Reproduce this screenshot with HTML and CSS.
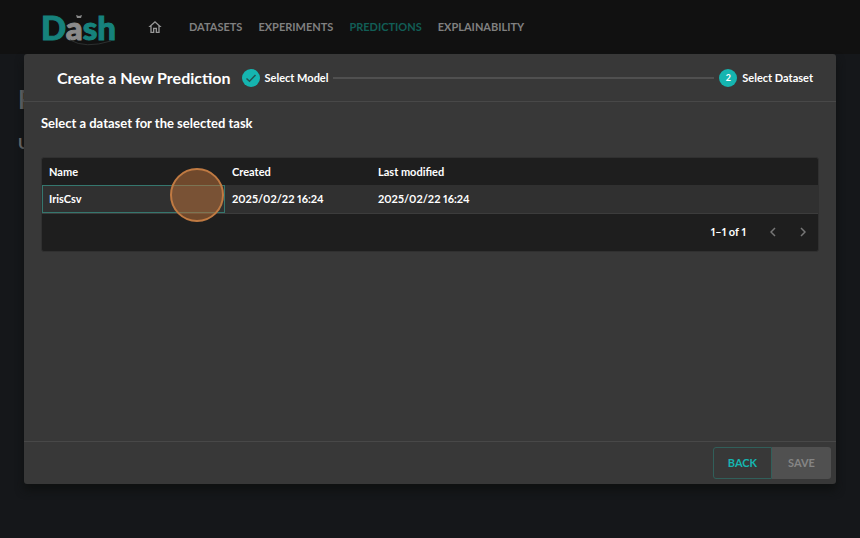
FILE: index.html
```
<!DOCTYPE html>
<html lang="en">
<head>
<meta charset="utf-8">
<title>Dash</title>
<link rel="stylesheet" href="styles.css">
</head>
<body>
<header class="navbar">
  <a class="logo" href="#"><span>D</span><span class="logo-light">a</span><span>sh</span>
    <svg class="logo-swoosh" viewBox="0 0 44 8" aria-hidden="true"><path d="M1 1 Q16 10 42 2" fill="none" stroke="#2c2f2f" stroke-width="1"/></svg>
    <svg class="logo-spark" viewBox="0 0 6 4" aria-hidden="true"><path d="M0 0L3 1L6 0L5 3H1Z" fill="#8a8a8a"/></svg>
  </a>
  <nav class="nav">
    <a class="home" href="#" aria-label="Home"><svg viewBox="0 0 24 24" width="16" height="16" aria-hidden="true"><path d="M12 3L2 12h3v9h6v-6h2v6h6v-9h3L12 3zm5 16h-2v-6H9v6H7v-8.800l5-4.500 5 4.500V19z" fill="#979797"/></svg></a>
    <a href="#">DATASETS</a>
    <a href="#">EXPERIMENTS</a>
    <a class="active" href="#">PREDICTIONS</a>
    <a href="#">EXPLAINABILITY</a>
  </nav>
</header>
<main class="page">
  <h1>P</h1>
  <p>U</p>
</main>
<div class="overlay">
  <section class="dialog" role="dialog" aria-labelledby="dialog-title">
    <header class="dialog-header">
      <h2 id="dialog-title">Create a New Prediction</h2>
      <ol class="stepper">
        <li><span class="badge"><svg viewBox="0 0 18 18" width="18" height="18" aria-hidden="true"><path d="M4.500 9.500L7.500 12.200L13.500 6" fill="none" stroke="#235351" stroke-width="1.500"/></svg></span>Select Model</li>
        <li class="connector" aria-hidden="true"></li>
        <li><span class="badge">2</span>Select Dataset</li>
      </ol>
    </header>
    <div class="dialog-body">
      <h3>Select a dataset for the selected task</h3>
      <div class="grid">
        <table>
          <colgroup><col class="col-name"><col class="col-date"><col></colgroup>
          <thead><tr><th>Name</th><th>Created</th><th>Last modified</th></tr></thead>
          <tbody><tr><td class="focused">IrisCsv<span class="pointer"></span></td><td>2025/02/22 16:24</td><td>2025/02/22 16:24</td></tr></tbody>
        </table>
        <div class="pager">
          <span>1–1 of 1</span>
          <button type="button" aria-label="Previous page"><svg viewBox="0 0 6 10" width="6" height="10"><path d="M5 1L1 5L5 9"/></svg></button>
          <button type="button" aria-label="Next page"><svg viewBox="0 0 6 10" width="6" height="10"><path d="M1 1L5 5L1 9"/></svg></button>
        </div>
      </div>
    </div>
    <footer class="dialog-footer">
      <button class="back" type="button">BACK</button>
      <button class="save" type="button" disabled>SAVE</button>
    </footer>
  </section>
</div>
</body>
</html>
```
FILE: styles.css
```
* { box-sizing: border-box; }
body {
  margin: 0;
  min-height: 100vh;
  background: #15171a;
  color: #fff;
  font: 700 11px/16px Lato, "Open Sans", sans-serif;
  font-variant-numeric: proportional-nums;
}
h1, h2, h3, p, ol { margin: 0; padding: 0; }
a { color: inherit; text-decoration: none; }
button { font: inherit; }
.navbar {
  display: flex;
  align-items: center;
  height: 54px;
  padding: 0 41px;
  background: #111;
  color: #808080;
}
.logo {
  position: relative;
  color: #16827c;
  font: 900 33px/40px Lato, sans-serif;
  -webkit-text-stroke: 1px currentColor;
}
.logo-light { color: #8a8a8a; }
.logo-swoosh { position: absolute; left: 28px; bottom: 0; width: 44px; height: 8px; }
.logo-spark { position: absolute; left: 35px; top: 8px; width: 6px; height: 4px; }
.nav { display: flex; align-items: center; gap: 16px; margin-left: 31px; }
.home { display: flex; margin-right: 10px; }
.active { color: #115e56; }
.page { padding: 31px 18px; color: #777; }
.page h1 { font-size: 26px; line-height: 28px; }
.page p { margin-top: 22px; font-size: 16px; }
.overlay {
  position: absolute;
  inset: 0;
  display: flex;
  padding: 54px 24px;
}
.dialog {
  display: flex;
  flex: 1;
  flex-direction: column;
  border-radius: 3px;
  background: #383838;
  box-shadow: 0 6px 8px #0f1111;
}
.dialog-header {
  display: flex;
  align-items: center;
  gap: 11px;
  height: 48px;
  padding: 0 23px 0 33px;
  border-bottom: 1px solid #484848;
}
.dialog-header h2 { font-size: 16px; line-height: 20px; }
.stepper { display: flex; flex: 1; align-items: center; gap: 5px; list-style: none; }
.stepper li { display: flex; align-items: center; gap: 5px; }
.stepper .connector { flex: 1; height: 2px; background: #505050; }
.badge {
  display: grid;
  place-items: center;
  width: 18px;
  height: 18px;
  border-radius: 50%;
  background: #15b5b0;
  font-size: 9px;
}
.dialog-body { flex: 1; padding: 13px 17px; }
.dialog-body h3 { font-size: 13px; line-height: 16px; }
.grid { margin-top: 26px; border: 1px solid #303030; border-radius: 3px; background: #1e1e1e; }
table { width: 100%; border-collapse: collapse; table-layout: fixed; }
.col-name { width: 183px; }
.col-date { width: 146px; }
th, td { padding: 0 7px; text-align: left; }
th { height: 27px; }
td { height: 28px; }
tbody tr { background: #303030; }
td { border-bottom: 1px solid #3c3c3c; }
.focused { position: relative; outline: 1px solid #35776e; outline-offset: -1px; }
.pointer {
  position: absolute;
  right: 1px;
  top: -17px;
  width: 54px;
  height: 54px;
  border: 2px solid #c07a42;
  border-radius: 50%;
  background: rgba(194, 116, 58, .5);
}
.pager { display: flex; align-items: center; justify-content: flex-end; height: 37px; padding-right: 12px; }
.pager button { display: flex; margin-left: 24px; padding: 0; border: 0; background: none; }
.pager path { fill: none; stroke: #777; stroke-width: 1.5; }
.dialog-footer { display: flex; justify-content: flex-end; padding: 5px; border-top: 1px solid #484848; }
.dialog-footer button { width: 59px; height: 32px; padding: 0; }
.back { border: 1px solid #315f5a; border-radius: 3px 0 0 3px; background: none; color: #15b5b0; }
.save { border: 0; border-radius: 0 3px 3px 0; background: #505050; color: #858585; }
```
